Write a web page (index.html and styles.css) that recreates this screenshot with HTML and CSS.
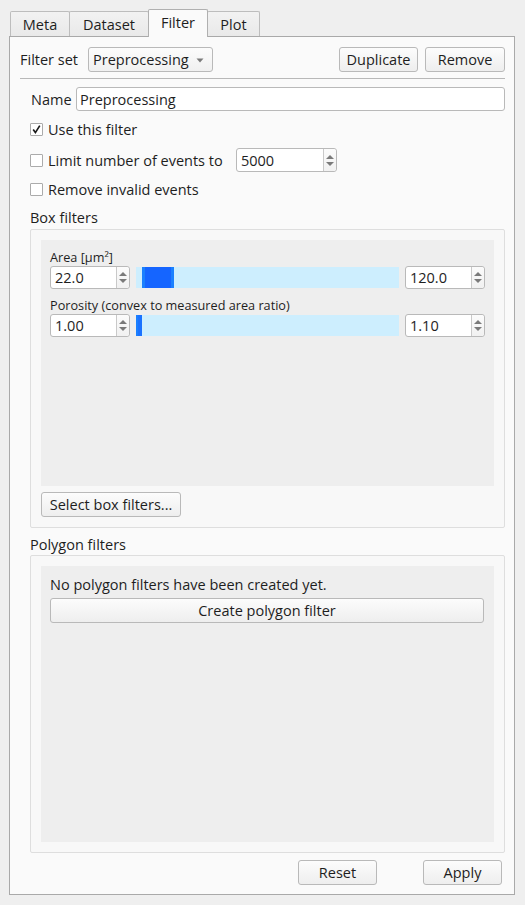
FILE: index.html
```html
<!DOCTYPE html>
<html>
<head>
<meta charset="utf-8">
<link rel="stylesheet" href="styles.css">
</head>
<body>
<div class="window">
  <div class="tabbar">
    <div class="tab tab-meta">Meta</div>
    <div class="tab tab-dataset">Dataset</div>
    <div class="tab tab-filter active">Filter</div>
    <div class="tab tab-plot">Plot</div>
  </div>
  <div class="pane">
    <div class="setrow">
      <span class="lbl">Filter set</span>
      <div class="combo"><span>Preprocessing</span><svg class="caret" width="8" height="5" viewBox="0 0 8 5"><path d="M0.5 0.5 H7.5 L4 4.5 Z" fill="#7a7a7a"/></svg></div>
      <div class="spacer"></div>
      <button class="btn btn-dup">Duplicate</button>
      <button class="btn btn-rem">Remove</button>
    </div>
    <div class="sep"></div>
    <div class="content">
      <div class="namerow">
        <span class="lbl">Name</span>
        <div class="input name-input">Preprocessing</div>
      </div>
      <div class="checkrow row-use">
        <span class="cb"><svg width="11" height="11" viewBox="0 0 11 11"><path d="M2.2 5.6 L4.4 8.6 L8.8 1.6" fill="none" stroke="#1a1a1a" stroke-width="1.7"/></svg></span>
        <span>Use this filter</span>
      </div>
      <div class="checkrow row-limit">
        <span class="cb"></span>
        <span class="limit-text">Limit number of events to</span>
        <div class="spin spin-limit"><span class="val">5000</span><span class="arrows"><i class="up"></i><i class="down"></i></span></div>
      </div>
      <div class="checkrow row-invalid">
        <span class="cb"></span>
        <span>Remove invalid events</span>
      </div>
      <div class="section-title box-title">Box filters</div>
      <div class="group box-group">
        <div class="inner box-inner">
          <div class="flabel">Area [µm²]</div>
          <div class="frow">
            <div class="spin spin-f"><span class="val">22.0</span><span class="arrows"><i class="up"></i><i class="down"></i></span></div>
            <div class="slider"><div class="handle handle-area"></div></div>
            <div class="spin spin-f"><span class="val">120.0</span><span class="arrows"><i class="up"></i><i class="down"></i></span></div>
          </div>
          <div class="flabel flabel2">Porosity (convex to measured area ratio)</div>
          <div class="frow">
            <div class="spin spin-f"><span class="val">1.00</span><span class="arrows"><i class="up"></i><i class="down"></i></span></div>
            <div class="slider"><div class="handle handle-por"></div></div>
            <div class="spin spin-f"><span class="val">1.10</span><span class="arrows"><i class="up"></i><i class="down"></i></span></div>
          </div>
        </div>
        <button class="btn btn-select">Select box filters...</button>
      </div>
      <div class="section-title poly-title">Polygon filters</div>
      <div class="group poly-group">
        <div class="inner poly-inner">
          <div class="nopoly">No polygon filters have been created yet.</div>
          <button class="btn btn-create">Create polygon filter</button>
        </div>
      </div>
      <div class="bottomrow">
        <button class="btn btn-reset">Reset</button>
        <button class="btn btn-apply">Apply</button>
      </div>
    </div>
  </div>
</div>
</body>
</html>
```

FILE: styles.css
```css
* { box-sizing: border-box; }
html, body { margin: 0; padding: 0; }
body {
  background: #efefef;
  font-family: "Open Sans", "Noto Sans", sans-serif;
  font-size: 14.5px;
  color: #1e1e1e;
  width: 525px;
  height: 905px;
  overflow: hidden;
}
.window { padding-top: 9px; }
.tabbar {
  display: flex;
  align-items: flex-end;
  padding-left: 10px;
  height: 28px;
  position: relative;
  z-index: 2;
}
.tab {
  height: 25px;
  margin-bottom: 1px;
  border: 1px solid #bdbdbd;
  border-bottom: none;
  background: linear-gradient(#f2f2f2, #e9e9e9);
  display: flex;
  align-items: center;
  justify-content: center;
  border-radius: 2px 2px 0 0;
}
.tab + .tab { margin-left: -1px; }
.tab-meta { width: 60px; }
.tab-dataset { width: 80px; }
.tab-filter { width: 60px; }
.tab-plot { width: 53px; }
.tab.active {
  height: 28px;
  margin-bottom: 0;
  background: #fafafa;
  border-color: #b0b0b0;
  position: relative;
  z-index: 3;
  padding-bottom: 2px;
}
.pane {
  margin: -1px 10px 0 9px;
  height: 859px;
  border: 1px solid #a9a9a9;
  background: #fafafa;
  padding: 10px 9px 0 10px;
  display: flex;
  flex-direction: column;
}
.setrow {
  display: flex;
  align-items: center;
  height: 25px;
}
.lbl { white-space: nowrap; }
.setrow .lbl { width: 68px; }
.combo {
  width: 125px;
  height: 25px;
  border: 1px solid #b9b9b9;
  border-radius: 3px;
  background: linear-gradient(#fcfcfc, #f0f0f0);
  display: flex;
  align-items: center;
  justify-content: space-between;
  padding: 0 8px 0 4px;
}
.caret { margin-top: 1px; }
.spacer { flex: 1; }
.btn {
  font-family: inherit;
  font-size: inherit;
  color: inherit;
  height: 25px;
  border: 1px solid #b9b9b9;
  border-radius: 3px;
  background: linear-gradient(#fcfcfc, #eeeeee);
  padding: 0;
  display: flex;
  align-items: center;
  justify-content: center;
}
.btn-dup { width: 79px; }
.btn-rem { width: 80px; margin-left: 7px; }
.sep {
  height: 1px;
  background: #b8b8b8;
  margin-top: 6px;
}
.content {
  padding-left: 10px;
  display: flex;
  flex-direction: column;
  flex: 1;
}
.namerow {
  display: flex;
  align-items: center;
  margin-top: 8px;
  height: 24px;
  padding-left: 1px;
}
.namerow .lbl { width: 45px; }
.input {
  height: 24px;
  border: 1px solid #b9b9b9;
  border-radius: 3px;
  background: #ffffff;
  display: flex;
  align-items: center;
  padding-left: 3px;
}
.name-input { flex: 1; }
.checkrow {
  display: flex;
  align-items: center;
}
.row-use { height: 20px; margin-top: 8px; }
.row-limit { height: 24px; margin-top: 9px; }
.row-invalid { height: 20px; margin-top: 7px; }
.cb {
  width: 13px;
  height: 13px;
  border: 1px solid #ababab;
  background: #ffffff;
  border-radius: 1px;
  margin-right: 5px;
  display: flex;
  align-items: center;
  justify-content: center;
}
.limit-text { width: 188px; }
.spin {
  height: 24px;
  border: 1px solid #b9b9b9;
  border-radius: 3px;
  background: #ffffff;
  display: flex;
  align-items: stretch;
}
.spin .val {
  flex: 1;
  display: flex;
  align-items: center;
  padding-left: 4px;
}
.arrows {
  width: 13px;
  border-left: 1px solid #c9c9c9;
  display: flex;
  flex-direction: column;
  align-items: center;
  justify-content: center;
  gap: 3px;
  background: linear-gradient(#fbfbfb, #f1f1f1);
  border-radius: 0 3px 3px 0;
}
.arrows i {
  width: 0;
  height: 0;
  border-left: 4px solid transparent;
  border-right: 4px solid transparent;
}
.arrows .up { border-bottom: 4px solid #7a7a7a; }
.arrows .down { border-top: 4px solid #7a7a7a; }
.spin-limit { width: 101px; }
.section-title {
  height: 18px;
  display: flex;
  align-items: center;
}
.box-title { margin-top: 9px; }
.group {
  margin-top: 3px;
  width: 475px;
  border: 1px solid #dedede;
  border-radius: 2px;
  background: #f8f8f8;
  padding: 10px 10px 10px 10px;
}
.inner { background: #eeeeee; }
.box-inner {
  height: 246px;
  padding: 8px 9px 0 9px;
}
.flabel {
  height: 18px;
  font-size: 12.7px;
  display: flex;
  align-items: center;
}
.flabel2 { margin-top: 7px; }
.frow {
  display: flex;
  align-items: center;
  gap: 6px;
  height: 23px;
}
.spin-f { width: 80px; height: 23px; }
.slider {
  flex: 1;
  height: 21px;
  background: #cdeefe;
  position: relative;
}
.handle {
  position: absolute;
  top: 0;
  bottom: 0;
  background: #1565ff;
  border-left: 3px solid #1a80ff;
  border-right: 3px solid #1a80ff;
}
.handle-area { left: 6px; width: 32px; }
.handle-por { left: 0; width: 6px; border-right: none; border-left-width: 2px; background: #1a72ff; }
.btn-select {
  width: 140px;
  height: 25px;
  margin-top: 6px;
}
.poly-title { margin-top: 7px; }
.poly-group { margin-top: 2px; height: 298px; }
.poly-inner {
  height: 276px;
  padding: 9px 9px 0 9px;
}
.nopoly {
  height: 18px;
  display: flex;
  align-items: center;
}
.btn-create {
  width: 434px;
  height: 25px;
  margin-top: 5px;
}
.bottomrow {
  display: flex;
  justify-content: flex-end;
  margin-top: 7px;
  padding-right: 3px;
}
.btn-reset { width: 79px; }
.btn-apply { width: 79px; margin-left: 46px; }
```
